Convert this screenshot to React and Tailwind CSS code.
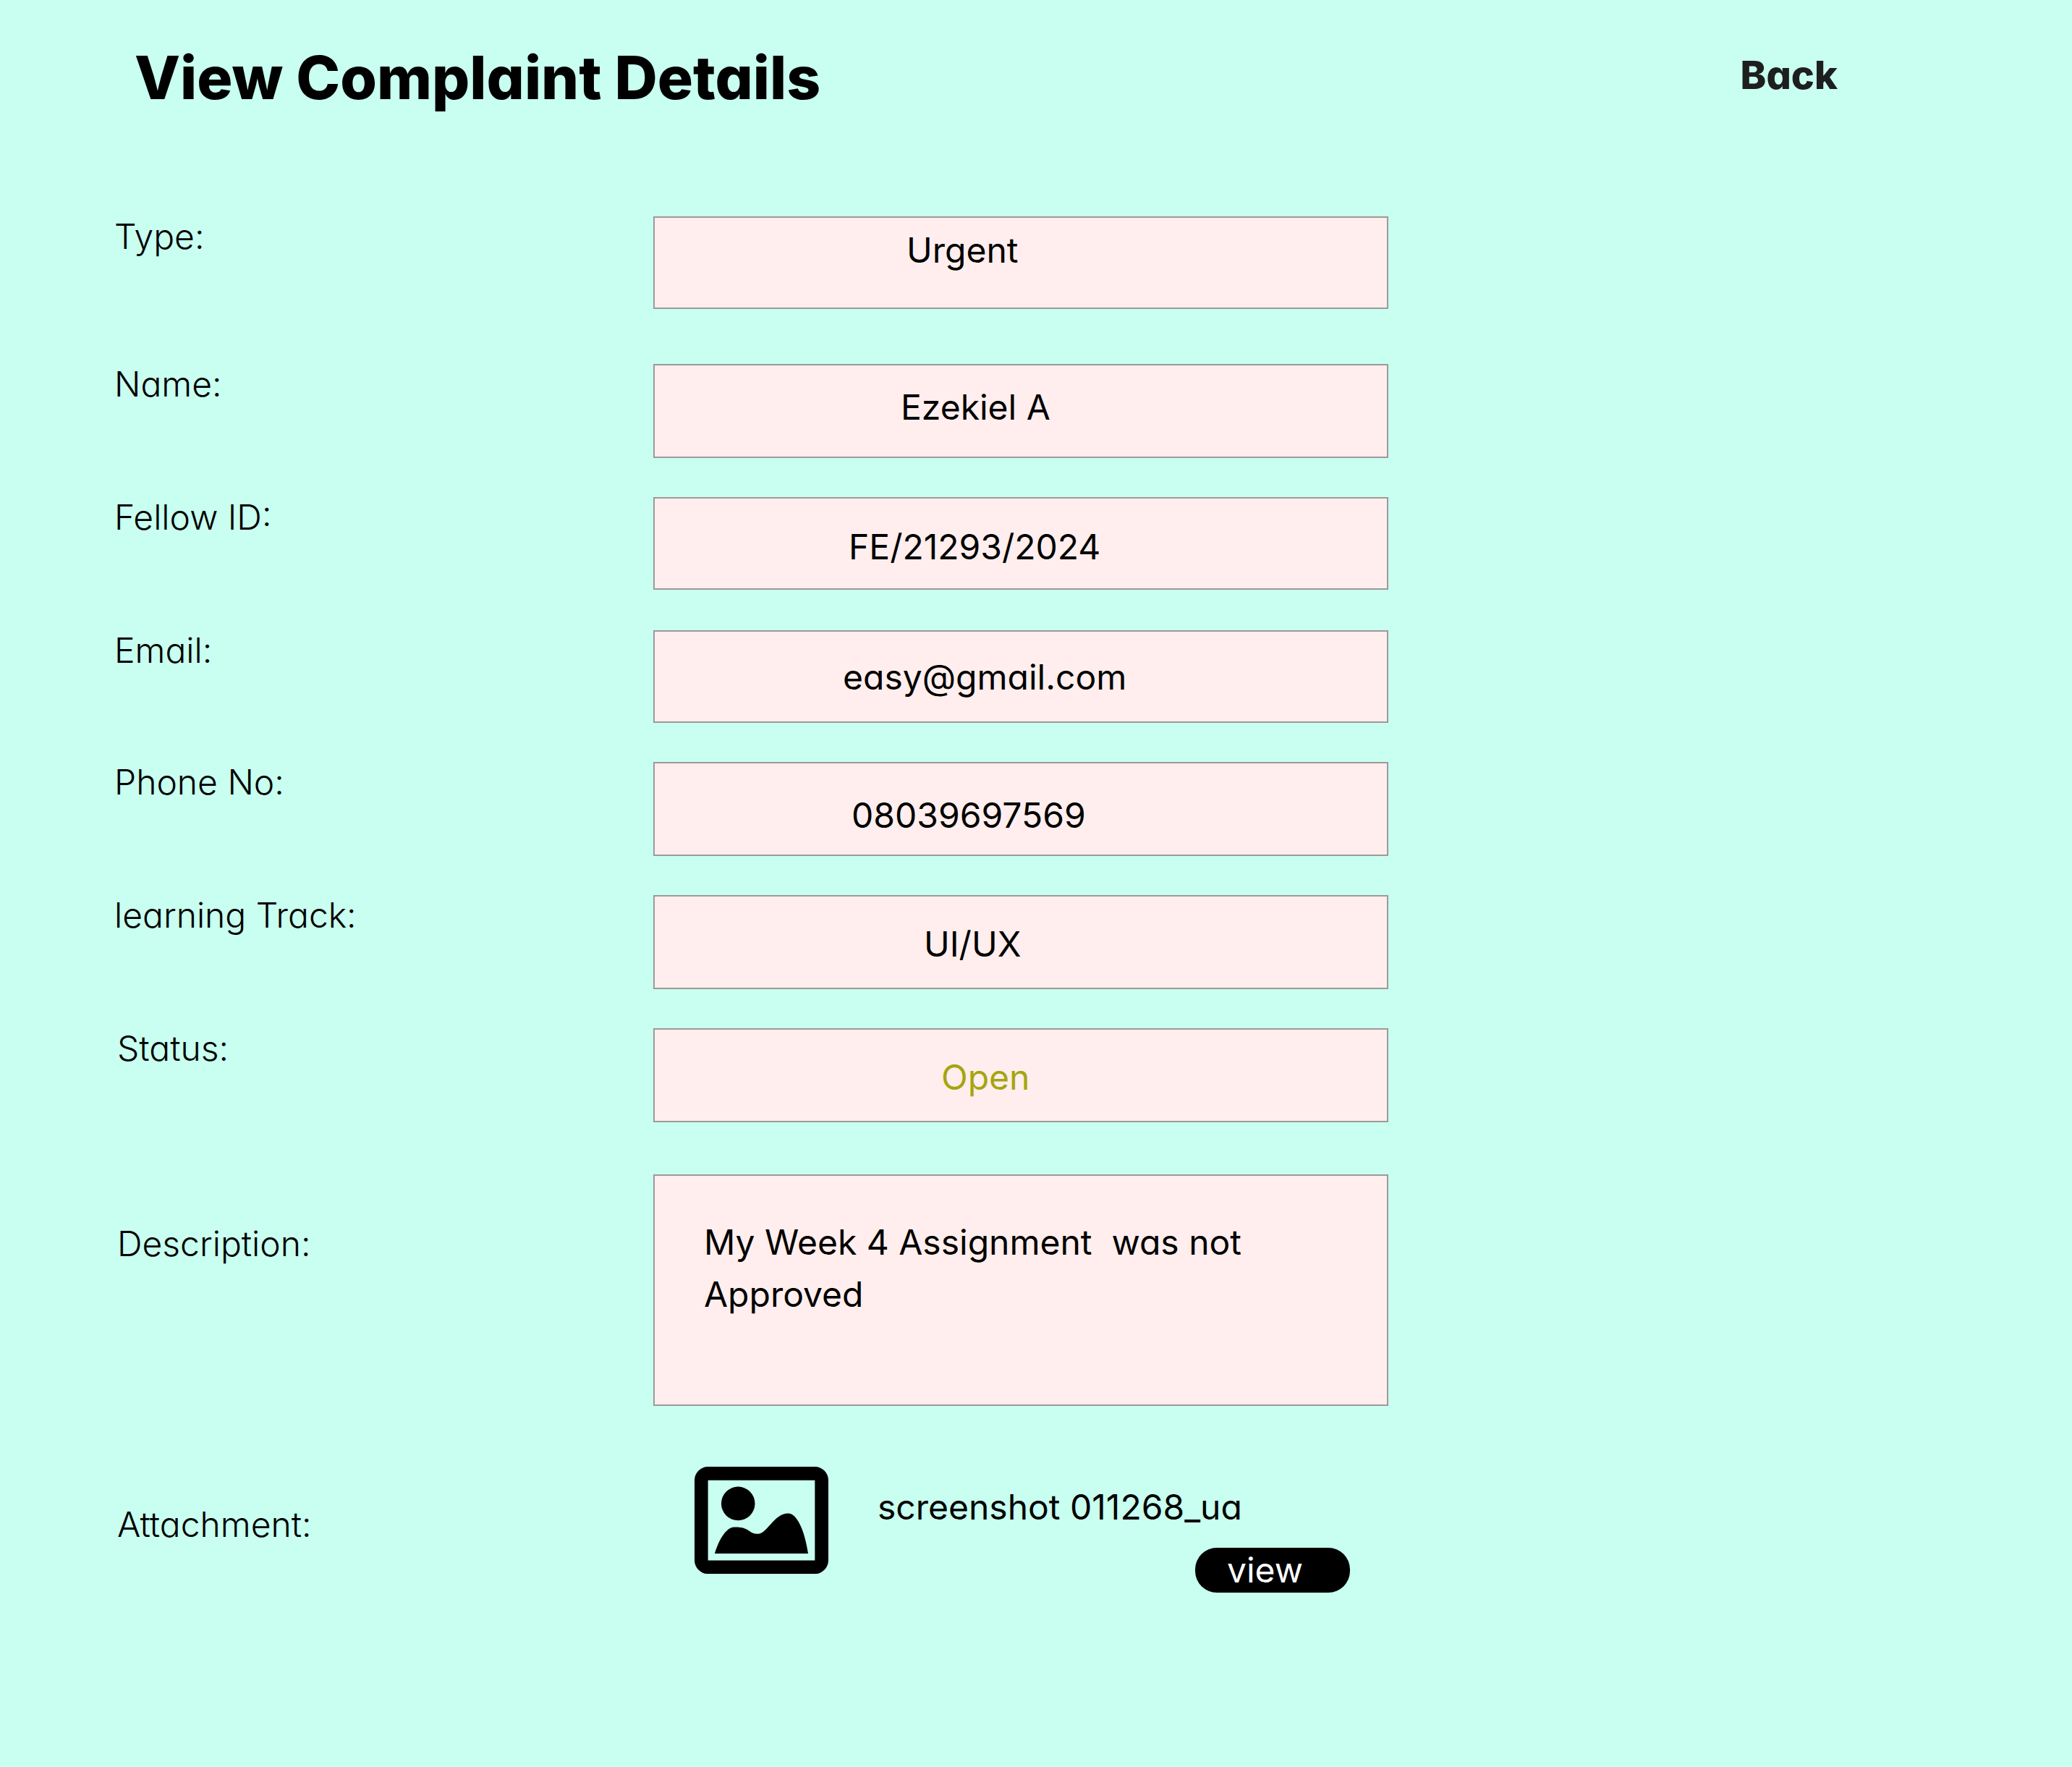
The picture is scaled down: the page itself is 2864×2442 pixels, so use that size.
const FIELDS = [
  { id: "type", label: "Type:", value: "Urgent", row: "mb-[76px]", box: "h-[128px] pb-9 pl-87" },
  { id: "name", label: "Name:", value: "Ezekiel A", row: "mb-[54px]", box: "h-[130px] pb-3 pl-85" },
  { id: "fellow-id", label: "Fellow ID:", value: "FE/21293/2024", row: "mb-[56px]", box: "h-[128px] pt-2 pl-67" },
  { id: "email", label: "Email:", value: "easy@gmail.com", row: "mb-[54px]", box: "h-[128px] pl-65" },
  { id: "phone", label: "Phone No:", value: "08039697569", row: "mb-[54px]", box: "h-[130px] pt-4 pl-68" },
  { id: "track", label: "learning Track:", value: "UI/UX", row: "mb-[54px]", box: "h-[130px] pt-1 pl-93" },
  {
    id: "status",
    label: "Status:",
    value: "Open",
    row: "mb-[72px]",
    indent: "pl-1",
    box: "h-[130px] pt-1 pl-99 text-[#a5a50f]",
  },
];

const LABEL = "w-[745px] shrink-0 text-[48px] leading-[56px] font-light";
const BOX =
  "block w-full max-w-[1016px] min-w-0 flex-1 resize-none rounded-none border-2 border-[#9e9999] bg-[#ffeeed] text-[48px] leading-[72px] outline-none";

function PictureIcon() {
  return (
    <svg className="w-[185px] shrink-0" viewBox="0 0 556 445" aria-hidden="true">
      <path
        fillRule="evenodd"
        d="M56 0H500A56 56 0 0 1 556 56V389A56 56 0 0 1 500 445H56A56 56 0 0 1 0 389V56A56 56 0 0 1 56 0ZM56 56V389H500V56Z"
      />
      <circle cx="181" cy="153" r="70" />
      <path d="M84 361C102 300 134 251 164 251C232 249 222 279 264 279C302 279 330 194 389 194C425 194 457 262 472 361Z" />
    </svg>
  );
}

export default function App() {
  return (
    <main className="min-h-screen bg-[#c8fff0] pb-20 pl-[158px] font-['Inter','Liberation_Sans',sans-serif] text-black [font-feature-settings:'cv11','ss03'] [font-optical-sizing:none]">
      <header className="flex items-start justify-between pt-12 pr-[324px] pl-7">
        <h1 className="text-[82px] leading-[120px] font-extrabold">View Complaint Details</h1>
        <a href="#back" className="text-[54px] leading-[112px] font-extrabold text-[#1e1e1e]">
          Back
        </a>
      </header>

      <form className="mt-[131px] pr-20">
        {FIELDS.map((f) => (
          <div key={f.id} className={`flex items-start ${f.row}`}>
            <label htmlFor={f.id} className={`${LABEL} ${f.indent ?? ""}`}>
              {f.label}
            </label>
            <input id={f.id} type="text" readOnly value={f.value} className={`${BOX} ${f.box}`} />
          </div>
        ))}

        <div className="flex items-start">
          <label htmlFor="description" className={`${LABEL} pt-17 pl-1`}>
            Description:
          </label>
          <textarea
            id="description"
            readOnly
            value={"My Week 4 Assignment  was not\nApproved"}
            className={`${BOX} h-[320px] overflow-hidden pt-14 pl-17`}
          />
        </div>

        <div className="mt-21 flex items-start">
          <div className={`${LABEL} pt-13 pl-1`}>Attachment:</div>
          <div className="flex max-w-[1016px] flex-1 items-start gap-17 pr-[53px] pl-[57px]">
            <PictureIcon />
            <div className="flex flex-1 flex-col gap-5 pt-5">
              <span className="text-[48px] leading-[72px] whitespace-nowrap">screenshot 011268_ua</span>
              <button
                type="button"
                className="h-[62px] w-[214px] self-end rounded-[30px] bg-black pl-11 text-left text-[48px] leading-[60px] text-white"
              >
                view
              </button>
            </div>
          </div>
        </div>
      </form>
    </main>
  );
}
